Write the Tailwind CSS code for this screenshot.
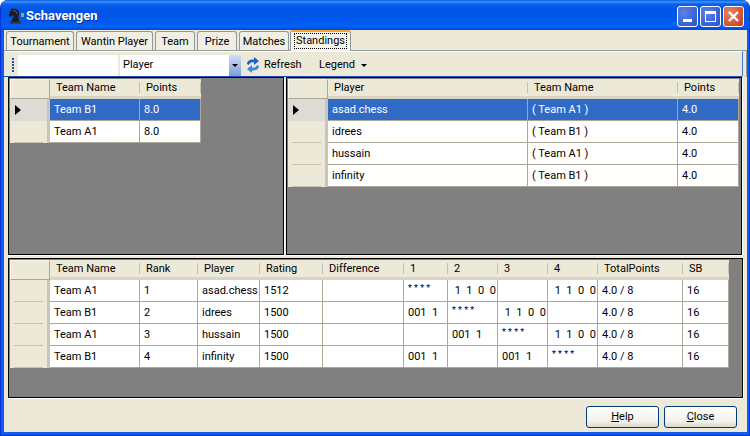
<!DOCTYPE html>
<html lang="en">
<head>
    <meta charset="UTF-8">
    <title>Schavengen</title>
    <script src="https://cdn.jsdelivr.net/npm/@tailwindcss/browser@4"></script>
</head>
<body class="bg-white font-['Roboto',sans-serif] text-[11px] text-black">
<div class="w-[750px] h-[436px] flex flex-col overflow-hidden rounded-t-[8px] border-x border-b border-x-[#0831d9] border-b-[#0831d9] bg-[#0f5ce8]">

    <!-- Title bar -->
    <div class="h-[30px] shrink-0 flex items-center pt-[2px] pl-[7px] pr-[5px] bg-[linear-gradient(#0a5fe0_0px,#3a93ff_2px,#0a5fea_4px,#0055e5_10px,#0058ee_20px,#0062f5_26px,#0048d8_30px)]">
        <svg class="w-[16px] h-[18px] mr-[2px]" viewBox="0 0 16 18">
            <path d="M3 16 L12 16 L11 13 C10 10 11 8 11 6 C11 3 8 1 5 2 L4 1 L3 3 C2 5 1 7 1 9 L3 10 L5 8 L6 9 C5 11 3 13 3 16Z" fill="#1c1c24"/>
            <path d="M5 4 C7 3 9 5 9 7" fill="none" stroke="#6b6b78" stroke-width="1"/>
            <rect x="13" y="6" width="3" height="4" fill="#d89030"/>
            <rect x="2" y="15" width="11" height="2" fill="#3a3a44"/>
        </svg>
        <span class="text-white font-bold text-[13px] [text-shadow:1px_1px_#0f2f9a]">Schavengen</span>
        <div class="ml-auto flex gap-[2px]">
            <div class="w-[21px] h-[21px] rounded-[3px] border border-white bg-[radial-gradient(circle_at_30%_30%,#5b83e8,#2a50cc)] flex items-end">
                <div class="w-[9px] h-[3px] bg-white ml-[5px] mb-[4px]"></div>
            </div>
            <div class="w-[21px] h-[21px] rounded-[3px] border border-white bg-[radial-gradient(circle_at_30%_30%,#5b83e8,#2a50cc)] flex items-center justify-center">
                <div class="w-[11px] h-[11px] border border-white border-t-[3px]"></div>
            </div>
            <div class="w-[21px] h-[21px] rounded-[3px] border border-white bg-[radial-gradient(circle_at_30%_30%,#e8836a,#c93a12)] flex items-center justify-center">
                <svg class="w-[11px] h-[11px]" viewBox="0 0 11 11"><path d="M1 1 L10 10 M10 1 L1 10" stroke="#fff" stroke-width="2.4"/></svg>
            </div>
        </div>
    </div>

    <!-- Window body -->
    <div class="flex-1 flex flex-col ml-[3px] mr-[2px] mb-[3px] bg-[#ece9d8]">

        <!-- Tabs -->
        <div class="h-[20px] shrink-0 flex items-end pl-[2px] gap-[2px]">
            <div class="w-[68px] h-[19px] pt-[2px] flex items-center justify-center border border-b-0 border-[#919b9c] rounded-t-[3px] bg-[#f1efe3]">Tournament</div>
            <div class="w-[77px] h-[19px] pt-[2px] flex items-center justify-center border border-b-0 border-[#919b9c] rounded-t-[3px] bg-[#f1efe3]">Wantin Player</div>
            <div class="w-[40px] h-[19px] pt-[2px] flex items-center justify-center border border-b-0 border-[#919b9c] rounded-t-[3px] bg-[#f1efe3]">Team</div>
            <div class="w-[40px] h-[19px] pt-[2px] flex items-center justify-center border border-b-0 border-[#919b9c] rounded-t-[3px] bg-[#f1efe3]">Prize</div>
            <div class="w-[50px] h-[19px] pt-[2px] flex items-center justify-center border border-b-0 border-[#919b9c] rounded-t-[3px] bg-[#f1efe3]">Matches</div>
            <div class="w-[61px] h-[21px] ml-[-1px] mb-[-1px] relative flex items-center justify-center border-x border-[#919b9c] border-t-[2px] border-t-[#f5a623] rounded-t-[3px] bg-[#f7f5ec]">
                <span class="border border-dotted border-black px-[1px] leading-[14px] mb-[2px]">Standings</span>
            </div>
        </div>

        <!-- Tab page -->
        <div class="flex-1 flex flex-col border-t border-t-[#919b9c]">

            <!-- Toolbar -->
            <div class="h-[26px] shrink-0 mr-[4px] pt-[2px] flex items-center border-t border-t-white border-b border-b-[#1c4fb8] border-r border-r-[#3f74d0] rounded-br-[2px] bg-[#ece9d8] shadow-[3px_0_0_#ece9d8,4px_0_0_#919b9c]">
                <div class="w-[14px] h-full flex flex-col items-center justify-center gap-[1px] pl-[3px]">
                    <div class="w-[2px] h-[2px] bg-[#2d4f9e]"></div>
                    <div class="w-[2px] h-[2px] bg-[#2d4f9e]"></div>
                    <div class="w-[2px] h-[2px] bg-[#2d4f9e]"></div>
                    <div class="w-[2px] h-[2px] bg-[#2d4f9e]"></div>
                    <div class="w-[2px] h-[2px] bg-[#2d4f9e]"></div>
                </div>
                <div class="w-[100px] h-[21px] bg-white"></div>
                <div class="w-[121px] h-[21px] ml-[2px] bg-white flex items-center justify-between pl-[3px]">
                    <span class="pt-[1px]">Player</span>
                    <div class="w-[12px] h-[21px] bg-[linear-gradient(#d3def6,#7b9ddc)] flex items-center justify-center">
                        <div class="w-0 h-0 border-x-[3px] border-x-transparent border-t-[3px] border-t-black"></div>
                    </div>
                </div>
                <svg class="w-[14px] h-[16px] ml-[5px]" viewBox="0 0 14 16">
                    <path d="M1 7 C1 4 4 2 8 2.500 L8 0 L13 4 L8 8 L8 5.500 C5 5 4 6 3 8 Z" fill="#1f5fc9"/>
                    <path d="M13 9 C13 12 10 14 6 13.500 L6 16 L1 12 L6 8 L6 10.500 C9 11 10 10 11 8 Z" fill="#3c86e0"/>
                </svg>
                <span class="ml-[4px] w-[38px] pt-[1px]">Refresh</span>
                <span class="ml-[17px] w-[36px]">Legend</span>
                <div class="ml-[6px] w-0 h-0 border-x-[3px] border-x-transparent border-t-[3px] border-t-black"></div>
            </div>

            <!-- Grids -->
            <div class="flex flex-col gap-[3px] px-[4px]">
                <div class="flex gap-[2px]">
                    <div class="w-[276px] h-[178px] border border-black p-px bg-[#808080] shadow-[1px_1px_0_#fff]">
                        <div id="teams" class="grid grid-cols-[40px_90px_61px] w-fit"></div>
                    </div>
                    <div class="w-[456px] h-[178px] border border-black p-px bg-[#808080] shadow-[1px_1px_0_#fff]">
                        <div id="players" class="grid grid-cols-[40px_200px_150px_61px] w-fit"></div>
                    </div>
                </div>
                <div class="h-[140px] border border-black p-px bg-[#808080] shadow-[1px_1px_0_#fff]">
                    <div id="standings" class="grid grid-cols-[40px_90px_58px_62px_63px_81px_44px_50px_50px_50px_85px_46px] w-fit"></div>
                </div>
            </div>

            <!-- Buttons -->
            <div class="flex-1 flex items-start justify-end gap-[5px] pt-[8px] pr-[10px]">
                <button class="w-[73px] h-[22px] rounded-[3px] border border-[#003c74] bg-[linear-gradient(#fff,#f3f2ec_70%,#dcd8cc)]"><u>H</u>elp</button>
                <button class="w-[73px] h-[22px] rounded-[3px] border border-[#003c74] bg-[linear-gradient(#fff,#f3f2ec_70%,#dcd8cc)]"><u>C</u>lose</button>
            </div>
        </div>
    </div>
</div>

<script>
    // header + rows for the three grids
    const headCell = "h-[20px] flex items-center pl-[6px] pt-[1px] bg-[#ece9d8] border-b-[3px] border-b-[#d8d5c5] relative after:absolute after:right-0 after:top-[3px] after:h-[11px] after:w-px after:bg-[#c4c1b0]";
    const cornerCell = "h-[20px] bg-[#ece9d8] border border-[#aca899] border-t-[#f7f5ec] border-l-[#f7f5ec]";
    const rowHead = "h-[22px] bg-[#ece9d8] border-r-[3px] border-r-[#c9c6b6] flex items-center relative after:absolute after:left-[4px] after:right-[4px] after:bottom-0 after:h-px after:bg-[#c4c1b0]";
    const rowHeadSel = "h-[22px] bg-[#dddcd4] border-r-[3px] border-r-[#c9c6b6] flex items-center pl-[5px]";
    const cell = "h-[22px] flex items-center pl-[4px] pt-[2px] whitespace-pre bg-white border-r border-b border-[#aca899]";
    const cellSel = "h-[22px] flex items-center pl-[4px] pt-[2px] whitespace-pre text-white bg-[#316ac5] border-r border-b border-[#aca899]";
    const stars = "text-[9px] mb-[6px]";

    function fill(id, heads, rows, selected) {
        const box = document.getElementById(id);
        let html = `<div class="${cornerCell}"></div>`;
        heads.forEach(h => { html += `<div class="${headCell}">${h}</div>`; });
        rows.forEach((row, i) => {
            const sel = i === selected;
            html += sel
                ? `<div class="${rowHeadSel}"><div class="w-0 h-0 border-y-[5px] border-y-transparent border-l-[6px] border-l-black"></div></div>`
                : `<div class="${rowHead}"></div>`;
            row.forEach(v => {
                const text = v === "* * * *" ? `<span class="${stars}">${v}</span>` : v;
                html += `<div class="${sel ? cellSel : cell}">${text}</div>`;
            });
        });
        box.innerHTML = html;
    }

    fill("teams", ["Team Name", "Points"], [["Team B1", "8.0"], ["Team A1", "8.0"]], 0);
    fill("players", ["Player", "Team Name", "Points"], [
        ["asad.chess", "( Team A1 )", "4.0"],
        ["idrees", "( Team B1 )", "4.0"],
        ["hussain", "( Team A1 )", "4.0"],
        ["infinity", "( Team B1 )", "4.0"]
    ], 0);
    fill("standings", ["Team Name", "Rank", "Player", "Rating", "Difference", "1", "2", "3", "4", "TotalPoints", "SB"], [
        ["Team A1", "1", "asad.chess", "1512", "", "* * * *", " 1  1  0  0", "", " 1  1  0  0", "4.0 / 8", "16"],
        ["Team B1", "2", "idrees", "1500", "", "001  1", "* * * *", " 1  1  0  0", "", "4.0 / 8", "16"],
        ["Team A1", "3", "hussain", "1500", "", "", "001  1", "* * * *", " 1  1  0  0", "4.0 / 8", "16"],
        ["Team B1", "4", "infinity", "1500", "", "001  1", "", "001  1", "* * * *", "4.0 / 8", "16"]
    ], -1);
</script>
</body>
</html>
